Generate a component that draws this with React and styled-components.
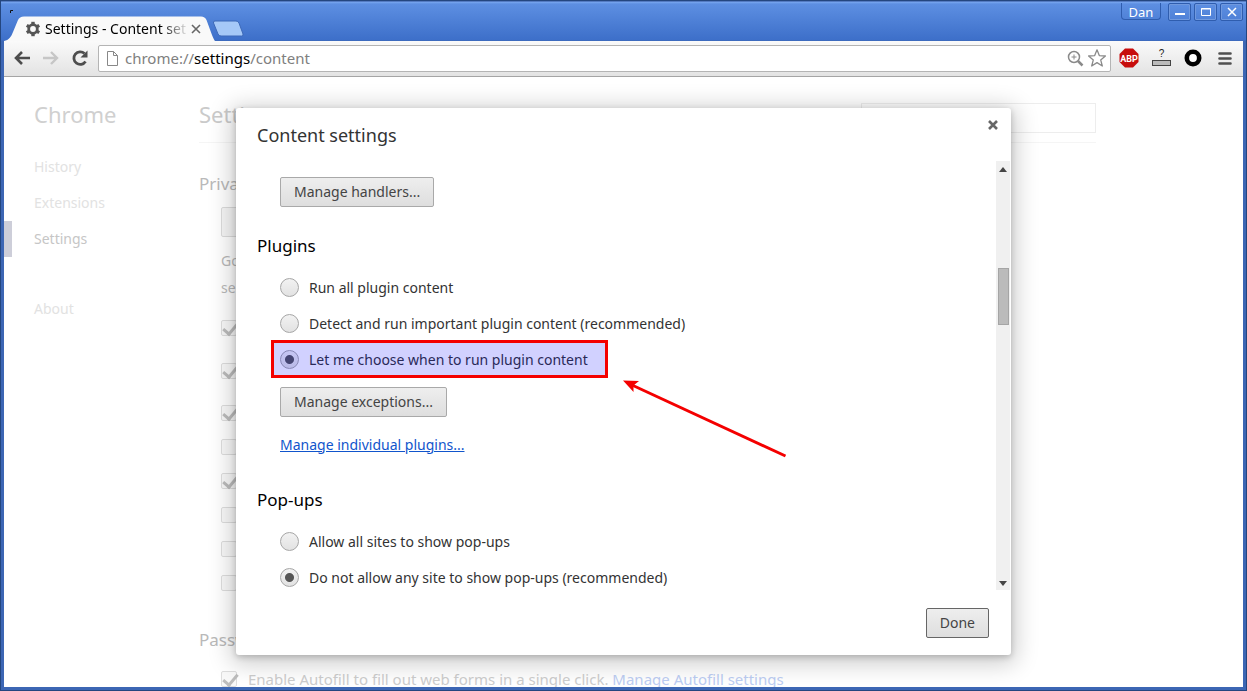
import React from 'react';
import styled, { createGlobalStyle } from 'styled-components';

const GlobalStyle = createGlobalStyle`
  * { box-sizing: border-box; }
  html, body, #root { height: 100%; }
  body {
    margin: 0;
    font-family: 'Noto Sans', 'Open Sans', sans-serif;
    font-size: 14px;
    color: #333;
  }
  button, input { font: inherit; }
`;

const BrowserWindow = styled.div`
  position: relative;
  height: 100vh;
  display: flex;
  flex-direction: column;
  overflow: hidden;
  padding: 0 4px 4px;
  background: linear-gradient(#2e4f96 0, #2e4f96 1px, #7aa8f0 2px, #5d8fe2 4px, #3d6fc9 40px, #3c66b4 41px);
  box-shadow: inset 0 0 0 1px #24467f;
`;

const WindowMenu = styled.svg`
  position: absolute;
  top: 10px;
  left: 10px;
`;

const TitleBar = styled.header`
  flex: none;
  height: 41px;
  display: flex;
  align-items: flex-end;
`;

const Tab = styled.div`
  position: relative;
  width: 211px;
  height: 25px;
  display: flex;
  align-items: center;
  gap: 4px;
  padding: 0 13px 0 21px;
`;

const TabShape = styled.svg`
  position: absolute;
  inset: 0;
  width: 100%;
  height: 100%;
`;

const TabTitle = styled.span`
  position: relative;
  flex: 1;
  overflow: hidden;
  white-space: nowrap;
  font-size: 14px;
  line-height: 20px;
  color: #000;
  mask-image: linear-gradient(to right, #000 116px, transparent 144px);
`;

const IconButton = styled.button`
  position: relative;
  flex: none;
  display: flex;
  align-items: center;
  justify-content: center;
  width: ${props => props.$size || 20}px;
  height: ${props => props.$size || 20}px;
  padding: 0;
  border: 0;
  background: none;
`;

const NewTab = styled(IconButton)`
  width: 32px;
  height: 17px;
  margin: 0 auto 4px -3px;
`;

const WindowButtons = styled.div`
  align-self: flex-start;
  display: flex;
  gap: 3px;
  padding-top: 3px;
`;

const UserButton = styled.button`
  width: 40px;
  height: 17px;
  margin-right: 4px;
  padding: 0;
  border: 1px solid #2f5dae;
  border-top: 0;
  border-radius: 0 0 4px 4px;
  background: transparent;
  color: #fff;
  font-size: 13px;
  line-height: 18px;
`;

const WindowButton = styled.button`
  width: 23px;
  height: 18px;
  display: flex;
  align-items: center;
  justify-content: center;
  padding: 0;
  border: 1px solid #2f5dae;
  border-radius: 2px;
  background: transparent;
  box-shadow: inset 0 0 0 1px #7099de;
`;

const Toolbar = styled.div`
  flex: none;
  height: 36px;
  display: flex;
  align-items: center;
  gap: 8px;
  padding: 0 8px 1px;
  background: linear-gradient(#fafafa, #e3e3e3);
  border-bottom: 1px solid #a5a5a5;
`;

const Navigation = styled.div`
  display: flex;
  gap: 9px;
`;

const Extensions = styled.div`
  display: flex;
  gap: 12px;
`;

const AddressBar = styled.div`
  flex: 1;
  height: 27px;
  display: flex;
  align-items: center;
  gap: 2px;
  padding: 0 3px 0 4px;
  border: 1px solid #b4b4b4;
  border-radius: 2px;
  background: #fff;
`;

const Url = styled.span`
  flex: 1;
  padding-left: 2px;
  font-size: 15px;
  line-height: 20px;
  color: #808080;

  b { font-weight: 400; color: #000; }
`;

const Viewport = styled.div`
  position: relative;
  flex: 1;
  min-height: 0;
  overflow: hidden;
  background: #fff;
`;

const Page = styled.div`
  display: flex;
  height: 100%;
  overflow: hidden;
`;

const Sidebar = styled.nav`
  flex: none;
  width: 195px;
  padding-top: 21px;
`;

const Brand = styled.h1`
  margin: 0 0 19px;
  padding-left: 30px;
  font-size: 22px;
  font-weight: 400;
  line-height: 32px;
  color: #d0d0d0;
`;

const NavLink = styled.a`
  display: block;
  margin-bottom: ${props => (props.$last ? 34 : 0)}px;
  padding-left: ${props => (props.$active ? 22 : 30)}px;
  border-left: ${props => (props.$active ? '8px solid #cdced9' : '0')};
  font-size: 14px;
  line-height: 36px;
  text-decoration: none;
  color: ${props => (props.$active ? '#c6c6c6' : '#e2e2e2')};
`;

const Main = styled.main`
  flex: 1;
  max-width: 897px;
  color: #b9b9b9;
`;

const PageHeader = styled.div`
  display: flex;
  align-items: center;
  justify-content: space-between;
  height: 66px;
  padding-top: 16px;
  border-bottom: 1px solid #f5f5f5;

  h2 {
    margin: 0;
    padding-bottom: 8px;
    font-size: 22px;
    font-weight: 400;
    color: #cacaca;
  }
`;

const SearchInput = styled.input`
  width: 235px;
  height: 30px;
  border: 1px solid #ededed;
  background: #fff;
`;

const SectionTitle = styled.h3`
  margin: 0;
  padding-top: ${props => props.$top}px;
  font-size: 17px;
  font-weight: 400;
  line-height: 24px;
`;

const SectionBody = styled.div`
  padding-left: 22px;
`;

const FadedButton = styled.button`
  width: 140px;
  height: 30px;
  margin: 11px 0 10px;
  border: 1px solid #dcdcdc;
  border-radius: 2px;
  background: #f6f6f6;
  color: #b9b9b9;
`;

const Hint = styled.p`
  margin: 0 0 19px;
  font-size: 14px;
  line-height: 27px;
`;

const CheckRow = styled.label`
  display: flex;
  align-items: center;
  gap: 11px;
  height: 16px;
  margin: ${props => props.$top || 0}px 0 ${props => props.$gap || 0}px;
  font-size: 15px;
  line-height: 20px;
  white-space: nowrap;
  color: #cdcdcd;

  a { color: #bccdf3; text-decoration: none; }
`;

const CheckBox = styled.input`
  appearance: none;
  flex: none;
  width: 16px;
  height: 16px;
  margin: 0;
  border: 1px solid #dedede;
  border-radius: 2px;
  background: #f9f9f9;

  &:checked::after {
    content: '';
    display: block;
    width: 12px;
    height: 6px;
    margin: 2px 0 0 1px;
    border: solid #bdbdbd;
    border-width: 0 0 3px 3px;
    transform: rotate(-50deg);
  }
`;

const Overlay = styled.div`
  position: absolute;
  inset: 0;
  display: flex;
  align-items: center;
  justify-content: center;
  padding-bottom: 2px;
`;

const Dialog = styled.section`
  position: relative;
  width: 100%;
  max-width: 775px;
  height: calc(100% - 61px);
  display: flex;
  flex-direction: column;
  border-radius: 3px;
  background: #fff;
  box-shadow: 0 4px 23px 5px rgba(0, 0, 0, 0.2), 0 2px 6px rgba(0, 0, 0, 0.2);
`;

const DialogHeader = styled.div`
  flex: none;
  height: 53px;
  display: flex;
  align-items: center;
  justify-content: space-between;
  padding: 1px 8px 0 21px;

  h2 {
    margin: 0;
    font-size: 18px;
    font-weight: 400;
    line-height: 24px;
    color: #333;
  }
`;

const CloseButton = styled(IconButton)`
  margin-bottom: 20px;
`;

const ScrollPane = styled.div`
  flex: 1;
  min-height: 0;
  display: flex;
`;

const Content = styled.div`
  flex: 1;
  overflow: hidden;
  padding: 16px 21px 0;
`;

const GroupTitle = styled.h3`
  margin: ${props => props.$top}px 0 13px;
  font-size: 17px;
  font-weight: 400;
  line-height: 22px;
  color: #000;
`;

const Group = styled.div`
  display: flex;
  flex-direction: column;
  align-items: flex-start;
  padding-left: 23px;
`;

const RadioRow = styled.label`
  position: relative;
  height: 36px;
  display: flex;
  align-items: center;
  gap: 10px;
  font-size: 14px;
  white-space: nowrap;

  &::after {
    content: '';
    display: ${props => (props.$highlight ? 'block' : 'none')};
    position: absolute;
    inset: -2px -20px 0 -9px;
    border: 3px solid #f40000;
    background: rgba(0, 0, 255, 0.18);
  }
`;

const Radio = styled.input`
  appearance: none;
  width: 19px;
  height: 19px;
  margin: 0;
  border: 1px solid #a6a6a6;
  border-radius: 50%;
  background: linear-gradient(#f2f2f2, #e2e2e2);

  &:checked {
    background: radial-gradient(circle, #555 4px, transparent 5px), linear-gradient(#f2f2f2, #e2e2e2);
  }
`;

const Button = styled.button`
  height: 30px;
  margin-top: ${props => props.$top || 0}px;
  padding: 0 13px;
  border: 1px solid ${props => (props.$strong ? '#666' : '#a9a9a9')};
  border-radius: 2px;
  background: linear-gradient(#eee, #dedede);
  color: #444;
  font-size: 14px;
`;

const PluginLink = styled.a`
  margin-top: 18px;
  font-size: 14px;
  line-height: 20px;
  color: #15c;
`;

const ScrollBar = styled.div`
  flex: none;
  width: 14px;
  margin-right: 1px;
  display: flex;
  flex-direction: column;
  align-items: center;
  padding: 6px 0 4px;
  background: #f0f0f0;
`;

const ScrollThumb = styled.div`
  width: 11px;
  height: 57px;
  margin: 96px 0 auto;
  border: 1px solid #a5a5a5;
  background: #bbb;
`;

const DialogFooter = styled.div`
  flex: none;
  display: flex;
  justify-content: flex-end;
  padding: 18px 22px 17px;
`;

const Arrow = styled.svg`
  position: absolute;
  left: 385px;
  top: 270px;
  pointer-events: none;
`;

const privacyChecks = [
  { on: true, gap: 27 },
  { on: true, gap: 26 },
  { on: true, gap: 18 },
  { on: false, gap: 18 },
  { on: true, gap: 18 },
  { on: false, gap: 18 },
  { on: false, gap: 18 },
  { on: false, gap: 0 },
];

const GearIcon = styled.svg`
  position: relative;
  flex: none;
`;

const Gear = () => (
  <GearIcon width="16" height="16" viewBox="0 0 16 16">
    <circle cx="8" cy="8" r="4.3" fill="none" stroke="#555" strokeWidth="2.8" />
    {[0, 60, 120, 180, 240, 300].map(a => (
      <rect key={a} x="6.3" y="0.8" width="3.4" height="3" fill="#555" transform={`rotate(${a} 8 8)`} />
    ))}
  </GearIcon>
);

const BrowserChrome = () => (
  <>
    <WindowMenu width="4" height="4"><path d="M0.5 3V0.5H3" fill="none" stroke="#111" /></WindowMenu>
    <TitleBar>
      <Tab>
        <TabShape viewBox="0 0 211 25" preserveAspectRatio="none">
          <path d="M0 25C5 24 7 21 9 16L14 4Q15.5 0.5 20 0.5H197Q201 0.5 202.5 4L208 19Q210 24 211 25Z" fill="#f9f9f9" />
        </TabShape>
        <Gear />
        <TabTitle>Settings - Content settings</TabTitle>
        <IconButton $size={12} aria-label="Close tab">
          <svg width="12" height="12" viewBox="0 0 12 12">
            <path d="M2 2l8 8M10 2l-8 8" stroke="#666" strokeWidth="1.6" />
          </svg>
        </IconButton>
      </Tab>
      <NewTab aria-label="New tab">
        <svg width="32" height="17" viewBox="0 0 32 17">
          <path d="M3 1H24Q26 1 27 3L31 14Q31.5 16 29.5 16H9Q7 16 6 14L1.5 3Q1 1 3 1Z" fill="#a5c8f7" stroke="#3d69b8" />
        </svg>
      </NewTab>
      <WindowButtons>
        <UserButton>Dan</UserButton>
        <WindowButton aria-label="Minimize">
          <svg width="12" height="10"><path d="M1 7h10" stroke="#fff" strokeWidth="2" /></svg>
        </WindowButton>
        <WindowButton aria-label="Maximize">
          <svg width="12" height="10"><path d="M1.5 1.5h9v7h-9zM1 2h10" fill="none" stroke="#fff" /></svg>
        </WindowButton>
        <WindowButton aria-label="Close window">
          <svg width="12" height="10"><path d="M2 1l8 8M10 1l-8 8" stroke="#fff" strokeWidth="1.5" /></svg>
        </WindowButton>
      </WindowButtons>
    </TitleBar>
    <Toolbar>
      <Navigation>
        <IconButton aria-label="Back">
          <svg width="20" height="20" viewBox="0 0 20 20">
            <path d="M18 10H4M10 4L4 10L10 16" fill="none" stroke="#4d4d4d" strokeWidth="2.6" />
          </svg>
        </IconButton>
        <IconButton aria-label="Forward">
          <svg width="20" height="20" viewBox="0 0 20 20">
            <path d="M2 10H16M10 4L16 10L10 16" fill="none" stroke="#c6c6c6" strokeWidth="2.4" />
          </svg>
        </IconButton>
        <IconButton aria-label="Reload">
          <svg width="20" height="20" viewBox="0 0 20 20">
            <path d="M15.5 13.5A6.3 6.3 0 1 1 14.5 5.5" fill="none" stroke="#4d4d4d" strokeWidth="2.8" />
            <path d="M17.5 2.5V9.5H10.5Z" fill="#4d4d4d" />
          </svg>
        </IconButton>
      </Navigation>
      <AddressBar>
        <svg width="18" height="20" viewBox="0 0 18 20">
          <path d="M4.5 3.5h6l4 4v10h-10zM10.5 3.5v4h4" fill="none" stroke="#888" />
        </svg>
        <Url>chrome://<b>settings</b>/content</Url>
        <IconButton aria-label="Zoom">
          <svg width="20" height="20" viewBox="0 0 20 20">
            <circle cx="9" cy="9" r="5.5" fill="none" stroke="#8a8a8a" strokeWidth="1.5" />
            <path d="M13 13l4.5 4.5" stroke="#8a8a8a" strokeWidth="2.5" />
            <path d="M6.5 9h5M9 6.5v5" stroke="#8a8a8a" />
          </svg>
        </IconButton>
        <IconButton aria-label="Bookmark">
          <svg width="20" height="20" viewBox="0 0 20 20">
            <path d="M10 1.8L12.3 7.6L18.4 8L13.7 11.9L15.3 18L10 14.6L4.7 18L6.3 11.9L1.6 8L7.7 7.6Z" fill="none" stroke="#8a8a8a" strokeWidth="1.3" strokeLinejoin="round" />
          </svg>
        </IconButton>
      </AddressBar>
      <Extensions>
        <IconButton aria-label="Adblock Plus">
          <svg width="20" height="20" viewBox="0 0 20 20">
            <path d="M6 0.5h8l5.5 5.5v8L14 19.5H6L0.5 14V6Z" fill="#c70d0d" />
            <text x="10" y="13.5" fontSize="9" fontWeight="700" fontFamily="Roboto, sans-serif" fill="#fff" textAnchor="middle">ABP</text>
          </svg>
        </IconButton>
        <IconButton aria-label="Ruler">
          <svg width="20" height="20" viewBox="0 0 20 20">
            <rect x="1.5" y="12.5" width="18" height="5" fill="#bbb" stroke="#444" />
            <text x="10.5" y="9" fontSize="10" fontFamily="Liberation Sans, sans-serif" fill="#222" textAnchor="middle">?</text>
          </svg>
        </IconButton>
        <IconButton aria-label="Extension">
          <svg width="20" height="20" viewBox="0 0 20 20">
            <circle cx="10" cy="10" r="6.2" fill="#fff" stroke="#000" strokeWidth="4.6" />
          </svg>
        </IconButton>
        <IconButton aria-label="Menu">
          <svg width="20" height="20" viewBox="0 0 20 20">
            <path d="M4.5 5.5h11M4.5 10.5h11M4.5 15.5h11" stroke="#505050" strokeWidth="2.6" strokeLinecap="round" />
          </svg>
        </IconButton>
      </Extensions>
    </Toolbar>
  </>
);

const SettingsPage = () => (
  <Page>
    <Sidebar>
      <Brand>Chrome</Brand>
      <NavLink href="#history">History</NavLink>
      <NavLink href="#extensions">Extensions</NavLink>
      <NavLink href="#settings" $active $last>Settings</NavLink>
      <NavLink href="#about">About</NavLink>
    </Sidebar>
    <Main>
      <PageHeader>
        <h2>Settings</h2>
        <SearchInput type="search" aria-label="Search settings" />
      </PageHeader>
      <SectionTitle $top={29}>Privacy</SectionTitle>
      <SectionBody>
        <FadedButton aria-label="Content settings" />
        <Hint>Google<br />services</Hint>
        {privacyChecks.map((item, index) => (
          <CheckRow key={index} $gap={item.gap}>
            <CheckBox type="checkbox" defaultChecked={item.on} aria-label={`Privacy option ${index + 1}`} />
          </CheckRow>
        ))}
      </SectionBody>
      <SectionTitle $top={37}>Passwords</SectionTitle>
      <SectionBody>
        <CheckRow $top={19}>
          <CheckBox type="checkbox" defaultChecked />
          <span>Enable Autofill to fill out web forms in a single click. <a href="#autofill">Manage Autofill settings</a></span>
        </CheckRow>
      </SectionBody>
    </Main>
  </Page>
);

const ContentSettings = () => (
  <Dialog role="dialog" aria-labelledby="dialog-title">
    <DialogHeader>
      <h2 id="dialog-title">Content settings</h2>
      <CloseButton aria-label="Close">
        <svg width="12" height="12" viewBox="0 0 12 12">
          <path d="M2 2l8 8M10 2l-8 8" stroke="#666" strokeWidth="2.6" />
        </svg>
      </CloseButton>
    </DialogHeader>
    <ScrollPane>
      <Content>
        <Group>
          <Button>Manage handlers...</Button>
        </Group>
        <GroupTitle $top={28}>Plugins</GroupTitle>
        <Group>
          <RadioRow><Radio type="radio" name="plugins" />Run all plugin content</RadioRow>
          <RadioRow><Radio type="radio" name="plugins" />Detect and run important plugin content (recommended)</RadioRow>
          <RadioRow $highlight><Radio type="radio" name="plugins" defaultChecked />Let me choose when to run plugin content</RadioRow>
          <Button $top={9}>Manage exceptions...</Button>
          <PluginLink href="#plugins">Manage individual plugins...</PluginLink>
        </Group>
        <GroupTitle $top={34}>Pop-ups</GroupTitle>
        <Group>
          <RadioRow><Radio type="radio" name="popups" />Allow all sites to show pop-ups</RadioRow>
          <RadioRow><Radio type="radio" name="popups" defaultChecked />Do not allow any site to show pop-ups (recommended)</RadioRow>
        </Group>
      </Content>
      <ScrollBar>
        <svg width="8" height="5"><path d="M0 5L4 0L8 5Z" fill="#444" /></svg>
        <ScrollThumb />
        <svg width="8" height="5"><path d="M0 0L4 5L8 0Z" fill="#444" /></svg>
      </ScrollBar>
    </ScrollPane>
    <DialogFooter>
      <Button $strong>Done</Button>
    </DialogFooter>
    <Arrow width="170" height="84" viewBox="0 0 170 84">
      <path d="M12 7.5L164.5 78" stroke="#f40000" strokeWidth="3" />
      <path d="M2 2.5L18 3L12.5 7.5L12.5 14Z" fill="#f40000" />
    </Arrow>
  </Dialog>
);

const App = () => (
  <>
    <GlobalStyle />
    <BrowserWindow>
      <BrowserChrome />
      <Viewport>
        <SettingsPage />
        <Overlay>
          <ContentSettings />
        </Overlay>
      </Viewport>
    </BrowserWindow>
  </>
);

export default App;
